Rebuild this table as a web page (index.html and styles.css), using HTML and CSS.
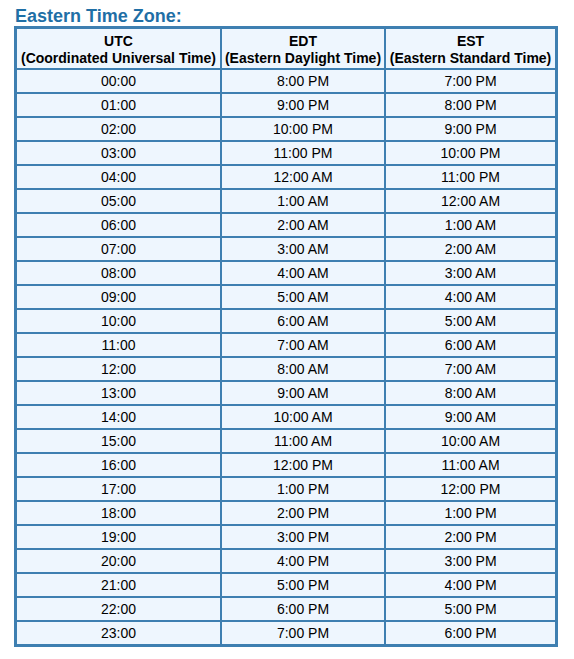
FILE: index.html
```html
<!DOCTYPE html>
<html>
<head>
<meta charset="utf-8">
<link rel="stylesheet" href="styles.css">
</head>
<body>
<h2 class="title">Eastern Time Zone:</h2>
<table class="tz">
<colgroup><col class="c1"><col class="c2"><col class="c3"></colgroup>
<thead>
<tr><th>UTC<br>(Coordinated Universal Time)</th><th>EDT<br>(Eastern Daylight Time)</th><th>EST<br>(Eastern Standard Time)</th></tr>
</thead>
<tbody>
<tr><td>00:00</td><td>8:00 PM</td><td>7:00 PM</td></tr>
<tr><td>01:00</td><td>9:00 PM</td><td>8:00 PM</td></tr>
<tr><td>02:00</td><td>10:00 PM</td><td>9:00 PM</td></tr>
<tr><td>03:00</td><td>11:00 PM</td><td>10:00 PM</td></tr>
<tr><td>04:00</td><td>12:00 AM</td><td>11:00 PM</td></tr>
<tr><td>05:00</td><td>1:00 AM</td><td>12:00 AM</td></tr>
<tr><td>06:00</td><td>2:00 AM</td><td>1:00 AM</td></tr>
<tr><td>07:00</td><td>3:00 AM</td><td>2:00 AM</td></tr>
<tr><td>08:00</td><td>4:00 AM</td><td>3:00 AM</td></tr>
<tr><td>09:00</td><td>5:00 AM</td><td>4:00 AM</td></tr>
<tr><td>10:00</td><td>6:00 AM</td><td>5:00 AM</td></tr>
<tr><td>11:00</td><td>7:00 AM</td><td>6:00 AM</td></tr>
<tr><td>12:00</td><td>8:00 AM</td><td>7:00 AM</td></tr>
<tr><td>13:00</td><td>9:00 AM</td><td>8:00 AM</td></tr>
<tr><td>14:00</td><td>10:00 AM</td><td>9:00 AM</td></tr>
<tr><td>15:00</td><td>11:00 AM</td><td>10:00 AM</td></tr>
<tr><td>16:00</td><td>12:00 PM</td><td>11:00 AM</td></tr>
<tr><td>17:00</td><td>1:00 PM</td><td>12:00 PM</td></tr>
<tr><td>18:00</td><td>2:00 PM</td><td>1:00 PM</td></tr>
<tr><td>19:00</td><td>3:00 PM</td><td>2:00 PM</td></tr>
<tr><td>20:00</td><td>4:00 PM</td><td>3:00 PM</td></tr>
<tr><td>21:00</td><td>5:00 PM</td><td>4:00 PM</td></tr>
<tr><td>22:00</td><td>6:00 PM</td><td>5:00 PM</td></tr>
<tr><td>23:00</td><td>7:00 PM</td><td>6:00 PM</td></tr>
</tbody>
</table>
</body>
</html>
```
FILE: styles.css
```css
html, body {
  margin: 0;
  padding: 0;
  background: #ffffff;
}
body {
  padding: 0 0 0 14px;
  font-family: "Liberation Sans", Arial, Helvetica, sans-serif;
  color: #000;
}
.title {
  margin: 0;
  padding: 6px 0 0 1px;
  height: 20px;
  font-size: 18px;
  line-height: 20px;
  font-weight: bold;
  color: #1f6fa6;
}
.tz {
  table-layout: fixed;
  width: 544px;
  border-collapse: separate;
  border-spacing: 0;
  border: 2px solid #3e7fb1;
  background: #eef6fe;
  font-size: 14px;
}
.c1 { width: 205px; }
.c2 { width: 164px; }
.c3 { width: 171px; }
.tz th, .tz td {
  border: 1px solid #3e7fb1;
  text-align: center;
  padding: 0;
}
.tz th {
  height: 41px;
  box-sizing: border-box;
  font-weight: bold;
  line-height: 17px;
  padding: 4px 0 0;
  vertical-align: top;
}
.tz td {
  height: 24px;
  box-sizing: border-box;
  line-height: 22px;
}
```
